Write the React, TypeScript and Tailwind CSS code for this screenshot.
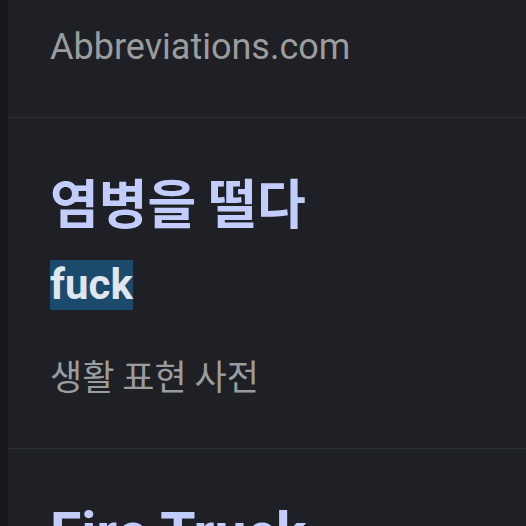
export default function App() {
  return (
    <div className="flex h-[526px] w-[526px] overflow-hidden bg-[#1e2025]">
      <div className="w-2 shrink-0 bg-[#16181c]" />
      <div className="flex flex-1 flex-col font-['Roboto','Noto_Sans_CJK_KR',sans-serif]">
        <section className="h-[118px] shrink-0 border-b border-[#2d3036] pl-[42px] pt-[23px]">
          <p className="text-[36px] leading-[48px] text-[#9b9c9e]">Abbreviations.com</p>
        </section>

        <section className="h-[331px] shrink-0 border-b border-[#2d3036] pl-[42px] pt-[51px]">
          <h2 className="font-['Noto_Sans_CJK_KR',sans-serif] text-[53px] font-bold leading-[64px] text-[#c3cdfc]">
            염병을 떨다
          </h2>
          <div className="mt-[27px] flex">
            <span className="h-[50px] bg-[#1c4a6c] text-[42px] font-bold leading-[50px] text-[#dfe6ee]">
              fuck
            </span>
          </div>
          <p className="mt-[43px] font-['Noto_Sans_CJK_KR',sans-serif] text-[35px] leading-[44px] text-[#9b9c9e]">
            생활 표현 사전
          </p>
        </section>

        <section className="pl-[42px] pt-[51px]">
          <h2 className="text-[57px] font-bold leading-[68px] text-[#c3cdfc]">Fire Truck</h2>
        </section>
      </div>
    </div>
  );
}
